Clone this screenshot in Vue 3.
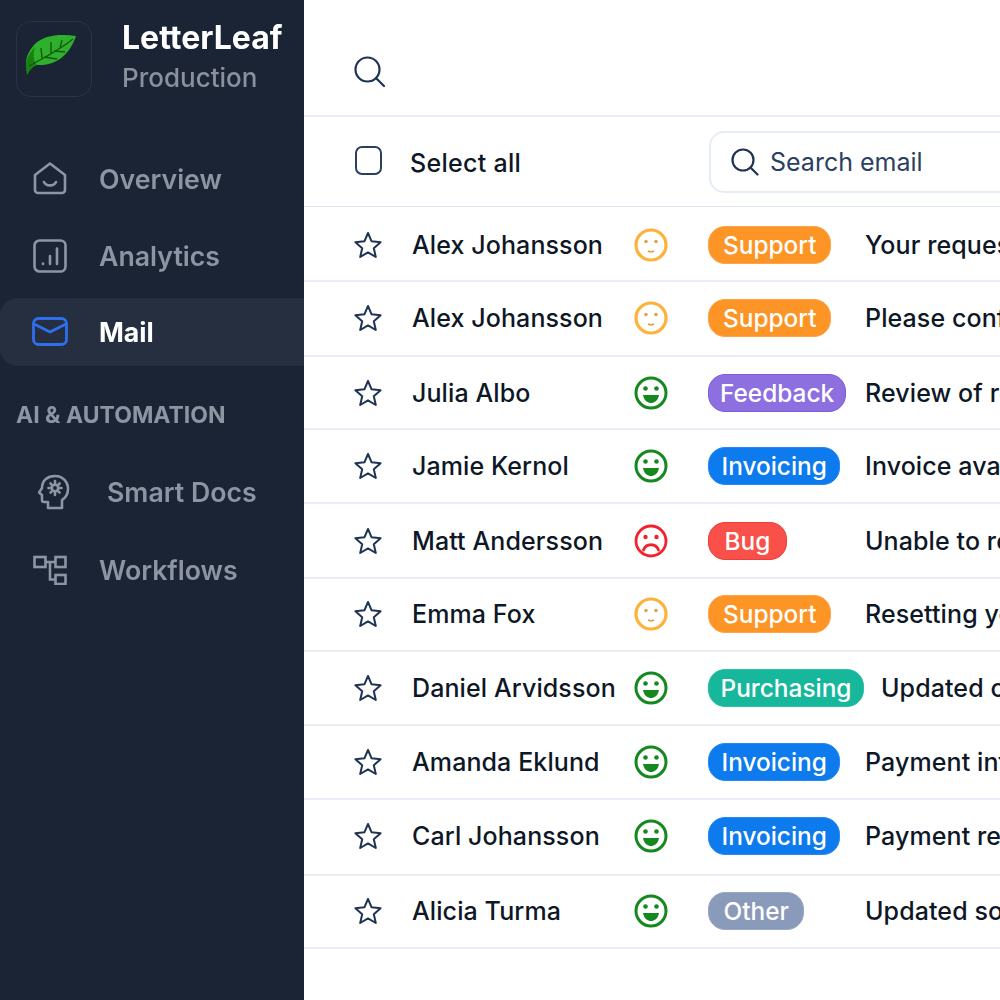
<script setup>
const rows = [
  { name: 'Alex Johansson', mood: 'neutral', tag: 'Support', subject: 'Your request has been received', h: 75, top: 2 },
  { name: 'Alex Johansson', mood: 'neutral', tag: 'Support', subject: 'Please confirm your details', h: 75, bottom: 2 },
  { name: 'Julia Albo', mood: 'happy', tag: 'Feedback', subject: 'Review of recent order', h: 73 },
  { name: 'Jamie Kernol', mood: 'happy', tag: 'Invoicing', subject: 'Invoice available to download', h: 74 },
  { name: 'Matt Andersson', mood: 'sad', tag: 'Bug', subject: 'Unable to reset password', h: 75 },
  { name: 'Emma Fox', mood: 'neutral', tag: 'Support', subject: 'Resetting your password', h: 73, bottom: 2 },
  { name: 'Daniel Arvidsson', mood: 'happy', tag: 'Purchasing', subject: 'Updated order details', h: 74 },
  { name: 'Amanda Eklund', mood: 'happy', tag: 'Invoicing', subject: 'Payment information', h: 74 },
  { name: 'Carl Johansson', mood: 'happy', tag: 'Invoicing', subject: 'Payment received', h: 76, bottom: 2 },
  { name: 'Alicia Turma', mood: 'happy', tag: 'Other', subject: 'Updated software version', h: 73, bottom: 2 }
]
</script>

<template>
  <div class="page">
    <aside class="sidebar">
      <div class="brand">
        <div class="logo">
          <svg width="54" height="44" viewBox="0 0 54 44">
            <path d="M52 3 C38 1 20 1 10 12 C5 18 2 24 2 30 L3 42 C6 36 9 33 13 32 C28 33 44 26 52 3 Z" fill="#2fb02c"/>
            <path d="M2 30 C3 25 6 19 11 14 C9 20 9 27 13 32 C9 33 6 36 3 42 Z" fill="#17800f"/>
            <path d="M5 33 C18 26 34 18 49 6 M18 25 L17 15 M27 20 L27 9 M36 15 L38 7 M20 24 L33 26 M30 18 L41 19" stroke="#14590f" stroke-width="1.4" fill="none"/>
          </svg>
        </div>
        <div class="brand-text">
          <div class="brand-name">LetterLeaf</div>
          <div class="brand-env">Production</div>
        </div>
      </div>

      <nav class="nav">
        <a class="nav-item">
          <svg class="nav-icon" width="34" height="34" viewBox="0 0 34 34" fill="none" stroke="currentColor" stroke-width="2.6" stroke-linejoin="round" stroke-linecap="round">
            <path d="M2 13 L17 1.500 L32 13 V28 a3 3 0 0 1 -3 3 H5 a3 3 0 0 1 -3 -3 Z"/>
            <path d="M11 20 c2 4.500 10 4.500 12 0"/>
          </svg>
          <span>Overview</span>
        </a>
        <a class="nav-item">
          <svg class="nav-icon" width="34" height="34" viewBox="0 0 34 34" fill="none" stroke="currentColor" stroke-width="2.600" stroke-linecap="round">
            <rect x="1.500" y="1.500" width="31" height="31" rx="5"/>
            <path d="M10 24.500 v.5 M17 17 v8 M24 9.500 v15.500"/>
          </svg>
          <span>Analytics</span>
        </a>
        <a class="nav-item active">
          <svg class="nav-icon" width="36" height="30" viewBox="0 0 36 30" fill="none" stroke="#2f6fed" stroke-width="2.800" stroke-linejoin="round">
            <rect x="1.500" y="1.500" width="33" height="26" rx="5"/>
            <path d="M2 7 L18 15 L34 7"/>
          </svg>
          <span>Mail</span>
        </a>
      </nav>

      <div class="section">AI &amp; AUTOMATION</div>

      <nav class="nav nav-ai">
        <a class="nav-item ai-docs">
          <svg class="nav-icon" width="32" height="36" viewBox="0 0 32 36" fill="none" stroke="currentColor" stroke-width="2.600" stroke-linejoin="round" stroke-linecap="round">
            <path d="M10 34 V28 H6 a2 2 0 0 1 -2 -2 V21 L1 18.500 L4 14 C4 6 10 2 17 2 C25 2 30 8 30 15 C30 20 27 24 24 26 V34 Z"/>
            <circle cx="17" cy="14" r="3.200"/>
            <path d="M17 7 v2.500 M17 18.500 v2.500 M10.500 14 h2.500 M21 14 h2.500 M12.500 9.500 l1.800 1.800 M19.800 16.800 l1.800 1.800 M21.600 9.500 l-1.800 1.800 M14.300 16.800 l-1.800 1.800"/>
          </svg>
          <span>Smart Docs</span>
        </a>
        <a class="nav-item">
          <svg class="nav-icon" width="34" height="30" viewBox="0 0 34 30" fill="none" stroke="currentColor" stroke-width="2.600">
            <rect x="1.500" y="2" width="11" height="10"/>
            <rect x="22.500" y="2" width="10" height="10"/>
            <rect x="22.500" y="20" width="10" height="9"/>
            <path d="M12.500 7 H22.500 M17 7 V24.500 H22.500"/>
          </svg>
          <span>Workflows</span>
        </a>
      </nav>
    </aside>

    <main class="main">
      <header class="topbar">
        <svg width="32" height="32" viewBox="0 0 32 32" fill="none" stroke="#1f3354" stroke-width="2.200" stroke-linecap="round">
          <circle cx="13.500" cy="13.500" r="12"/>
          <path d="M22.500 22.500 L30 30"/>
        </svg>
      </header>

      <div class="toolbar">
        <div class="check"></div>
        <div class="select-all">Select all</div>
        <div class="search">
          <svg width="28" height="28" viewBox="0 0 28 28" fill="none" stroke="#1f3354" stroke-width="2.200" stroke-linecap="round">
            <circle cx="12" cy="12" r="10.500"/>
            <path d="M19.500 19.500 L26.500 26.500"/>
          </svg>
          <span class="search-text">Search email</span>
        </div>
      </div>

      <div class="list">
        <div v-for="(r, i) in rows" :key="i" class="row" :style="{ height: r.h + 'px', paddingTop: (r.top || 0) + 'px', paddingBottom: (r.bottom || 0) + 'px' }">
          <svg class="star" width="28" height="28" viewBox="0 0 28 28" fill="none" stroke="#1f3354" stroke-width="2" stroke-linejoin="round">
            <path d="M14 2 L17.600 10.300 L26.600 11.200 L19.800 17.200 L21.800 26 L14 21.400 L6.200 26 L8.200 17.200 L1.400 11.200 L10.400 10.300 Z"/>
          </svg>
          <div class="name">{{ r.name }}</div>
          <svg v-if="r.mood === 'neutral'" class="mood" width="34" height="34" viewBox="0 0 34 34" fill="none">
            <circle cx="17" cy="17" r="15" stroke="#fdb23a" stroke-width="3.200"/>
            <circle cx="12" cy="13.500" r="1.700" fill="#e39a44"/>
            <circle cx="22" cy="13.500" r="1.700" fill="#e39a44"/>
            <path d="M14 23 q3 1.500 6 0" stroke="#e39a44" stroke-width="1.700"/>
          </svg>
          <svg v-else-if="r.mood === 'happy'" class="mood" width="34" height="34" viewBox="0 0 34 34" fill="none">
            <circle cx="17" cy="17" r="15" stroke="#15881f" stroke-width="3"/>
            <circle cx="11.500" cy="12.500" r="2.300" fill="#15881f"/>
            <circle cx="22.500" cy="12.500" r="2.300" fill="#15881f"/>
            <path d="M9 19 H25 C24 25 20 27 17 27 C14 27 10 25 9 19 Z" fill="#15881f"/>
          </svg>
          <svg v-else class="mood" width="34" height="34" viewBox="0 0 34 34" fill="none">
            <circle cx="17" cy="17" r="15" stroke="#f2222c" stroke-width="2.800"/>
            <circle cx="11.500" cy="13" r="2.200" fill="#f2222c"/>
            <circle cx="22.500" cy="13" r="2.200" fill="#f2222c"/>
            <path d="M9.500 26 C12 19 22 19 24.500 26" stroke="#f2222c" stroke-width="2.800" stroke-linecap="round"/>
          </svg>
          <div class="tag-cell">
            <div class="tag" :class="r.tag.toLowerCase()">{{ r.tag }}</div>
          </div>
          <div class="subject">{{ r.subject }}</div>
        </div>
      </div>
    </main>
  </div>
</template>

<style>
html, body { margin: 0; overflow: hidden; background: #fff; }
</style>

<style scoped>
.page {
  display: flex;
  width: 1000px;
  height: 1000px;
  overflow: hidden;
  font-family: Inter, "Noto Sans", sans-serif;
}
.sidebar {
  flex: 0 0 304px;
  background: #1b2435;
  display: flex;
  flex-direction: column;
  box-sizing: border-box;
  padding-top: 21px;
}
.brand {
  display: flex;
  gap: 30px;
  padding-left: 16px;
  height: 76px;
}
.logo {
  width: 76px;
  height: 76px;
  box-sizing: border-box;
  border: 1.500px solid #2b3444;
  border-radius: 15px;
  display: flex;
  align-items: center;
  justify-content: center;
}
.logo svg { margin-top: -8px; margin-left: -7px; }
.brand-text { filter: blur(0.4px); }
.brand-name {
  color: #fff;
  font-size: 32px;
  font-weight: 700;
  line-height: 34px;
}
.brand-env {
  color: #8a909c;
  font-size: 26px;
  font-weight: 500;
  line-height: 32px;
  margin-top: 7px;
}
.nav {
  display: flex;
  flex-direction: column;
  gap: 8.500px;
  margin-top: 48px;
}
.nav-item {
  display: flex;
  align-items: center;
  height: 68px;
  padding-left: 33px;
  color: #8d95a3;
  font-size: 26.700px;
  font-weight: 600;
}
.nav-item span { filter: blur(0.6px); }
.nav-item .nav-icon { flex: 0 0 auto; margin-right: 32px; filter: blur(0.4px); }
.nav-item.active {
  background: #262f40;
  border-radius: 18px 0 0 18px;
  color: #fff;
  font-weight: 700;
  padding-left: 32px;
}
.nav-item.active .nav-icon { margin-right: 31px; }
.section {
  color: #8d95a3;
  font-size: 23px;
  font-weight: 700;
  line-height: 28px;
  padding-left: 16px;
  margin-top: 35px;
  filter: blur(0.5px);
}
.nav-ai { margin-top: 29px; gap: 10px; }
.ai-docs { padding-left: 38px; }
.ai-docs .nav-icon { margin-right: 37px; }
.main {
  flex: 1;
  min-width: 0;
  background: #fff;
  color: #0e1726;
  overflow: hidden;
}
.topbar {
  height: 117px;
  box-sizing: border-box;
  border-bottom: 2px solid #e9eef6;
  padding: 56px 0 0 50px;
}
.topbar svg { display: block; }
.toolbar {
  height: 90px;
  box-sizing: border-box;
  border-bottom: 1.500px solid #dfe6f1;
  display: flex;
  align-items: center;
  padding-left: 51px;
}
.check {
  width: 27px;
  height: 29px;
  margin-top: -2px;
  box-sizing: border-box;
  border: 2px solid #2a4061;
  border-radius: 7px;
  flex: 0 0 auto;
}
.select-all {
  margin-left: 28px;
  margin-top: 2px;
  width: 299px;
  flex: 0 0 auto;
  font-size: 25px;
  font-weight: 500;
  letter-spacing: 0.3px;
}
.search {
  flex: 0 0 auto;
  width: 420px;
  height: 62px;
  box-sizing: border-box;
  border: 2px solid #e6ecf6;
  border-radius: 15px;
  display: flex;
  align-items: center;
  gap: 11px;
  padding-left: 20px;
  color: #2b4060;
  font-size: 25px;
}
.search-text { margin-top: 1px; }
.list { display: flex; flex-direction: column; }
.row {
  display: flex;
  align-items: center;
  box-sizing: border-box;
  border-bottom: 2px solid #e9eef6;
  padding-left: 50px;
  white-space: nowrap;
  font-size: 25px;
  font-weight: 450;
  letter-spacing: 0.1px;
  flex: 0 0 auto;
}
.star { flex: 0 0 auto; }
.name { width: 222px; margin-left: 30px; flex: 0 0 auto; }
.mood { flex: 0 0 auto; }
.tag-cell { margin-left: 40px; width: 157px; flex: 0 0 auto; }
.tag {
  display: inline-block;
  height: 38px;
  line-height: 36px;
  box-sizing: border-box;
  border-radius: 17px;
  color: #fff;
  border: 1px solid transparent;
  font-size: 24.400px;
  font-weight: 500;
  letter-spacing: 0;
}
.support { background: #fd9426; border-color: #fda548; padding: 0 14px; }
.feedback { background: #8e6fe0; border-color: #7d5cd8; padding: 0 11px; }
.invoicing { background: #0d7aed; border-color: #2a8af0; padding: 0 12.500px; }
.bug { background: #f9504a; border-color: #ec3f3a; padding: 0 15.500px; }
.purchasing { background: #17b79c; border-color: #2cc0a8; padding: 0 11.500px; }
.other { background: #8a9abb; border-color: #9aa8c4; padding: 0 14.500px; }
.subject { flex: 0 0 auto; }
.row:nth-child(7) .subject { margin-left: 16px; }
</style>
